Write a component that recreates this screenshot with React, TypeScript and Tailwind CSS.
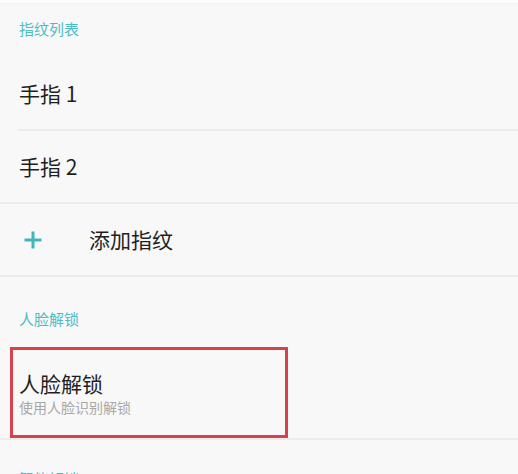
import React from 'react';

const cjk = { fontFamily: '"Noto Sans CJK SC", "Noto Sans", sans-serif' };

const SectionHeader: React.FC<{ label: string; className?: string }> = ({ label, className = '' }) => (
  <div className={`px-[19px] text-[15px] leading-4 text-[#4fbcc3] ${className}`}>{label}</div>
);

const Row: React.FC<{ children: React.ReactNode; inset?: boolean }> = ({ children, inset }) => (
  <div className="flex flex-col">
    <div className="flex h-[71px] items-center px-[19px] text-[21px] text-[#1f1f1f]">{children}</div>
    <div className={`h-[2px] bg-[#ebebeb] ${inset ? 'ml-[18px]' : ''}`} />
  </div>
);

export default function App() {
  return (
    <div className="h-[474px] w-[518px] overflow-hidden bg-[#f8f8f8]" style={cjk}>
      <div className="h-[4px] bg-[#fdfdfd] border-b border-[#f1f1f1]" />

      {/* 指纹 */}
      <SectionHeader label="指纹列表" className="pt-[17px] pb-[21px]" />
      <Row inset>手指 1</Row>
      <Row>手指 2</Row>
      <Row>
        <svg width="20" height="20" viewBox="0 0 20 20" className="ml-[4px] shrink-0">
          <path d="M10 1.5v17M1.5 10h17" stroke="#3fb6bd" strokeWidth="3" strokeLinecap="butt" fill="none" />
        </svg>
        <span className="ml-[46px]">添加指纹</span>
      </Row>

      {/* 人脸 */}
      <SectionHeader label="人脸解锁" className="pt-[34px] pb-[20px]" />
      <div className="ml-[10px] flex h-[91px] w-[278px] flex-col border-[3px] border-[#d7414b] pl-[6px] pt-[20px]">
        <span className="text-[21px] leading-[26px] text-[#1f1f1f]">人脸解锁</span>
        <span className="mt-[2px] text-[14px] leading-[18px] text-[#a8a8a8]">使用人脸识别解锁</span>
      </div>
      <div className="h-[2px] bg-[#ececec]" />

      <SectionHeader label="智能解锁" className="pt-[31px]" />
    </div>
  );
}
